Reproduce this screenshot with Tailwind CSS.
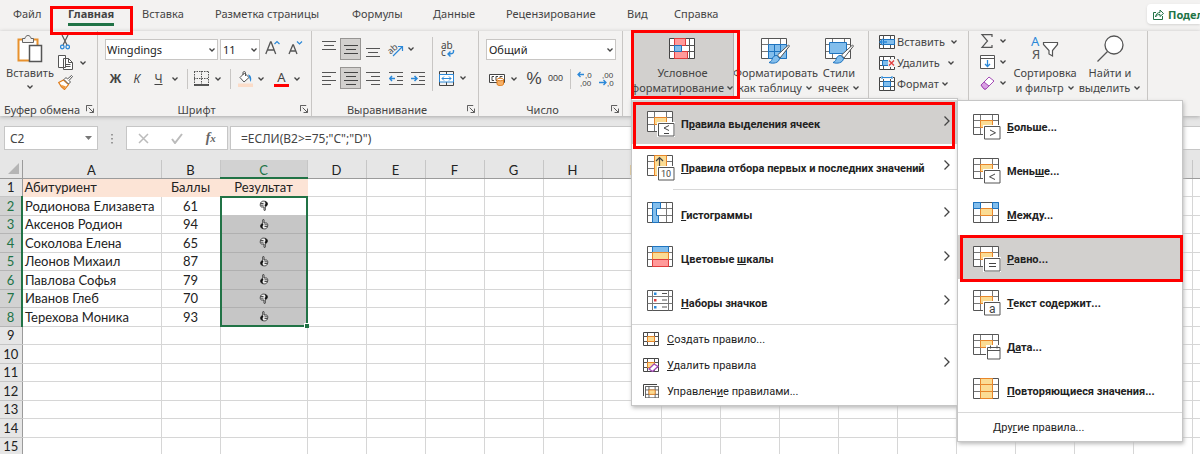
<!DOCTYPE html>
<html lang="ru">
<head>
<meta charset="utf-8">
<title>Excel</title>
<script src="https://cdn.jsdelivr.net/npm/@tailwindcss/browser@4"></script>
</head>
<body class="h-screen overflow-hidden bg-[#e6e6e6] font-['Noto_Sans','Open_Sans',sans-serif] text-[11px] leading-[15px] text-[#444]">

<svg class="hidden" xmlns="http://www.w3.org/2000/svg">
  <symbol id="chev" viewBox="0 0 8 6"><path d="M1.500 1.500 4 4 6.500 1.500" fill="none" stroke="#444" stroke-width="1.300"/></symbol>
  <symbol id="right" viewBox="0 0 8 12"><path d="M1.500 1.500 6 6 1.500 10.500" fill="none" stroke="#444" stroke-width="1.300"/></symbol>
  <symbol id="launch" viewBox="0 0 9 9"><path d="M.5 7V.5H7M3 3l5 5M8.500 4v4.500H4" fill="none" stroke="#444"/></symbol>
  <symbol id="grid" viewBox="0 0 28 26"><path d="M.5.500h25v20H.5z" fill="#fff"/><path d="M7.500.5v20M19.500.5v20M.5 6.500h25M.5 13.500h25" stroke="#777" fill="none"/><path d="M.5.500h25v20H.5z" fill="none" stroke="#555"/></symbol>
  <symbol id="gridhot" viewBox="0 0 28 26"><use href="#grid"/><path d="M7.500 6.500h12v7h-12z" fill="#fbdc94" stroke="#e8862a"/></symbol>
  <symbol id="tag" viewBox="0 0 28 26"><path d="M10 11h18v15H10z" fill="#fff"/><path d="M11.500 12.500h15.500v12.500H11.500z" fill="#fff" stroke="#555"/></symbol>
  <symbol id="brush" viewBox="0 0 22 20"><path d="M20.500 1 9.500 11l2.500 3L21.500 2z" fill="#fff" stroke="#555"/><path d="M9 11.500c-3-.5-4.500 2-5 4-.4 1.500-1.500 2.500-3 3 4 1.500 10 .5 10.500-4z" fill="#83beec" stroke="#1e74c0"/></symbol>
  <symbol id="mini" viewBox="0 0 16 14"><path d="M.5.500h15v13H.5z" fill="#fff" stroke="#444"/><path d="M4.500.5v13M11.500.5v13M.5 4.500h15M.5 9.500h15" stroke="#555"/></symbol>
  <symbol id="up" viewBox="0 0 10 11"><path d="M3.700 4.500V1c0-.8 1.300-.8 1.300 0v3h2.500c1 .3 1.500 1.500 1.200 3-.2 1.800-1.500 2.900-3.400 2.900C3 9.900 1.500 8.700 1.500 7c0-1.200.8-2.200 2.200-2.500z" fill="#eee" stroke="#222" stroke-width=".8"/><path d="M3.500 4.500C2 5 1.500 6 1.700 7.500c.2 1.200 1 2 2.300 2.300L3.500 7l1-1.200z" fill="#111"/><path d="M5.500 5.800h2.500M5.500 7.500h2.500" stroke="#222" stroke-width=".8"/></symbol>
  <symbol id="down" viewBox="0 0 10 11"><use href="#up" transform="matrix(-1 0 0 -1 10 11)"/></symbol>
</svg>

<!-- Tabs -->
<header class="flex h-[31px] items-start justify-between bg-[#f3f2f1] pt-1">
  <nav class="grid grid-cols-[55px_74px_73px_137px_81px_73px_121px_47px_60px] pt-[2px] pl-[13px] whitespace-nowrap">
    <a href="#">Файл</a>
    <a href="#" class="relative font-bold"><span class="inline-block border-b-3 border-[#217346] pb-[2px]">Главная</span><span class="absolute top-0 -left-[18px] h-[29px] w-[83px] border-3 border-[#f00]"></span></a>
    <a href="#">Вставка</a><a href="#">Разметка страницы</a><a href="#">Формулы</a><a href="#">Данные</a><a href="#">Рецензирование</a><a href="#">Вид</a><a href="#">Справка</a>
  </nav>
  <button class="flex h-5 w-[53px] shrink-0 items-center gap-1 overflow-hidden rounded-l-sm bg-white pl-[6px] font-bold text-[#217346] shadow-sm">
    <svg class="size-[11px] shrink-0" viewBox="0 0 11 11" fill="none" stroke="#217346"><path d="M3 3.500H.5v7h9V7M2.500 8c.5-3 2-4.500 4.500-4.500V1l3.500 3.500L7 7.500V5.500C5 5.500 3.500 6 2.500 8z"/></svg>Поделиться
  </button>
</header>

<!-- Ribbon -->
<section class="flex h-[85px] bg-[#f3f2f1] shadow-[0_1px_4px_#aaa]">
  <div class="flex w-[98px] shrink-0 flex-col">
    <div class="flex h-[71px] border-r border-[#c8c6c4]">
      <button class="flex w-[58px] flex-col items-center pt-1 pl-[2px]">
        <svg class="h-7 w-[26px]" viewBox="0 0 26 28" fill="none"><path d="M1.500 4.500h19v21h-19z" fill="#fff" stroke="#e8912d" stroke-width="2"/><path d="M5.500 7.500v-4H8c.3-2 1.500-3 3-3s2.700 1 3 3h2.500v4z" fill="#f3f2f1" stroke="#666"/><path d="M12.500 10.500h12v16h-12z" fill="#fff" stroke="#555" stroke-width="1.500"/></svg>
        <span class="pt-[2px]">Вставить</span><svg class="mt-1 h-[6px] w-2"><use href="#chev"/></svg>
      </button>
      <div class="flex flex-col gap-[5px] pt-1">
        <button aria-label="Вырезать" class="pl-[2px]"><svg class="h-[15px] w-[10px]" viewBox="0 0 10 15" fill="none"><path d="M2 0 7 10M8 0 3 10" stroke="#555" stroke-width="1.200"/><circle cx="2.300" cy="12" r="1.800" stroke="#2b88d8" stroke-width="1.300"/><circle cx="7.700" cy="12" r="1.800" stroke="#2b88d8" stroke-width="1.300"/></svg></button>
        <button aria-label="Копировать" class="flex items-center gap-[6px]"><svg class="h-[15px] w-[15px]" viewBox="0 0 15 15" fill="#fff" stroke="#555"><path d="M.5.500h7v12h-7zM5.500 3.500h5l4 4v7h-9z"/><path d="M10.500 3.500v4h4M7.500 9.500h5M7.500 11.500h5" fill="none"/></svg><svg class="h-[6px] w-2"><use href="#chev"/></svg></button>
        <button aria-label="Формат по образцу"><svg class="h-[15px] w-[15px]" viewBox="0 0 15 15"><path d="M.7 7.500 5.500 5l5 4.500-4 5C4.500 13 2 10.500.7 7.500z" fill="#fff" stroke="#e07c1a" stroke-width="1.200"/><path d="M2.500 9.500 8 11.500l-2 2.500z" fill="#f09a3e"/><path d="M6 4.500 8 2.500l1.500 1.500L13.500.5l1 1-3.500 4 1.500 1.500-2 2z" fill="#fff" stroke="#555"/></svg></button>
      </div>
    </div>
    <div class="flex h-[14px] items-center justify-between border-r border-[#c8c6c4] pr-[3px] pl-1"><span>Буфер обмена</span><svg class="size-[8px]"><use href="#launch"/></svg></div>
  </div>

  <div class="flex w-[214px] shrink-0 flex-col border-r border-[#c8c6c4]">
    <div class="flex h-[71px] flex-col gap-2 pt-2 pl-[7px]">
      <div class="flex h-[21px] items-center">
        <div class="relative"><select aria-label="Шрифт" class="h-[21px] w-[113px] appearance-none border border-[#c8c6c4] bg-white px-px text-[#222]"><option>Wingdings</option></select><svg class="absolute top-2 right-[2px] h-[6px] w-2"><use href="#chev"/></svg></div>
        <div class="relative ml-[2px]"><select aria-label="Размер" class="h-[21px] w-10 appearance-none border border-[#c8c6c4] bg-white px-[2px] text-[#222]"><option>11</option></select><svg class="absolute top-2 right-[2px] h-[6px] w-2"><use href="#chev"/></svg></div>
        <button aria-label="Увеличить размер" class="ml-[5px] pb-1"><svg class="h-[15px] w-[15px]" viewBox="0 0 15 15"><path d="M.8 14 5.500 2h.6l4.600 12M2.500 10h6.500" fill="none" stroke="#555" stroke-width="1.300"/><path d="M9.500 4 12 1.500 14.500 4" fill="none" stroke="#2b88d8" stroke-width="1.200"/></svg></button>
        <button aria-label="Уменьшить размер" class="ml-2 pb-1"><svg class="h-[15px] w-[15px]" viewBox="0 0 15 15"><path d="M1 14 4.800 5h.6L9 14M2.500 11h5.200" fill="none" stroke="#555" stroke-width="1.300"/><path d="M9 1.500 11.500 4 14 1.500" fill="none" stroke="#2b88d8" stroke-width="1.200"/></svg></button>
      </div>
      <div class="flex h-[21px] items-center text-[12px]">
        <button class="w-[21px] font-bold">Ж</button><button class="w-[22px] italic">К</button><button class="w-[21px] underline">Ч</button>
        <svg class="ml-[2px] h-[6px] w-2"><use href="#chev"/></svg>
        <span class="ml-2 h-5 w-px bg-[#c8c6c4]"></span>
        <button aria-label="Границы" class="ml-[6px]"><svg class="h-[15px] w-[15px]" viewBox="0 0 15 15" fill="none" stroke="#555"><path d="M.5.500v13M14.500.5v13M0 .5h15M7.500 0v13M0 7.500h15" stroke-dasharray="1.500 1"/><path d="M0 14h15" stroke="#222" stroke-width="1.500"/></svg></button>
        <svg class="ml-[5px] h-[6px] w-2"><use href="#chev"/></svg>
        <span class="ml-2 h-5 w-px bg-[#c8c6c4]"></span>
        <button aria-label="Заливка" class="ml-[7px]"><svg class="h-4 w-[15px]" viewBox="0 0 15 16"><path d="M2 6.500 6.500 2 11 6.500 6 11z" fill="#fff" stroke="#555"/><path d="M5 4V1.500C5 .3 7.500.3 7.500 1.500V5" fill="none" stroke="#555"/><path d="M10 3.500c3 .5 4 3.500 2.800 7.500-.8-1-1.300-4.500-2.800-7.500z" fill="#2b88d8"/><path d="M0 12.500h15V16H0z" fill="#fbdcc8"/></svg></button>
        <svg class="ml-1 h-[6px] w-2"><use href="#chev"/></svg>
        <button class="ml-[9px] h-4 w-[15px] border-b-3 border-[#f00] text-[13px] leading-[12px]">A</button>
        <svg class="ml-[4px] h-[6px] w-2"><use href="#chev"/></svg>
      </div>
    </div>
    <div class="relative flex h-[14px] items-center justify-center pr-4"><span>Шрифт</span><svg class="absolute right-[3px] size-[8px]"><use href="#launch"/></svg></div>
  </div>

  <div class="flex w-[167px] shrink-0 flex-col border-r border-[#c8c6c4]">
    <div class="flex h-[71px] pt-[6px] pl-[6px]">
      <div class="flex h-[54px] w-[115px] flex-col gap-[5px] border-r border-[#c8c6c4]">
        <div class="flex h-6 items-center">
          <button aria-label="По верхнему краю" class="w-[22px]"><svg class="mx-auto mb-[7px] h-[9px] w-[14px]" stroke="#555"><path d="M0 .5h14M2 4.500h10M0 8.500h14"/></svg></button>
          <button aria-label="По середине" class="h-[22px] w-[21px] border border-[#979593] bg-[#d2d0ce]"><svg class="mx-auto h-[9px] w-[14px]" stroke="#444"><path d="M0 .5h14M2 4.500h10M0 8.500h14"/></svg></button>
          <button aria-label="По нижнему краю" class="w-[23px]"><svg class="mx-auto mt-[7px] h-[9px] w-[14px]" stroke="#555"><path d="M0 .5h14M2 4.500h10M0 8.500h14"/></svg></button>
          <button aria-label="Ориентация" class="ml-1 flex items-center gap-1"><svg class="h-[15px] w-[15px] overflow-visible" viewBox="0 0 15 15"><text x="0" y="10" font-size="9" fill="#555" transform="rotate(-42 5 8)">ab</text><path d="M5 14 14 5M10 4.500h4.500V9" fill="none" stroke="#2b88d8" stroke-width="1.200"/></svg><svg class="h-[6px] w-2"><use href="#chev"/></svg></button>
        </div>
        <div class="flex h-6 items-center">
          <button aria-label="По левому краю" class="w-[22px]"><svg class="mx-auto h-[13px] w-[14px]" stroke="#555"><path d="M0 .5h14M0 4.500h9M0 8.500h14M0 12.500h9"/></svg></button>
          <button aria-label="По центру" class="h-[22px] w-[21px] border border-[#979593] bg-[#d2d0ce]"><svg class="mx-auto h-[13px] w-[14px]" stroke="#444"><path d="M0 .5h14M2 4.500h10M0 8.500h14M2 12.500h10"/></svg></button>
          <button aria-label="По правому краю" class="w-[23px]"><svg class="mx-auto h-[13px] w-[14px]" stroke="#555"><path d="M0 .5h14M5 4.500h9M0 8.500h14M5 12.500h9"/></svg></button>
          <button aria-label="Уменьшить отступ" class="ml-[5px]"><svg class="h-[13px] w-[14px]" stroke="#555"><path d="M0 .5h14M8 4.500h6M8 8.500h6M0 12.500h14"/><path d="M1 6.500h5M3 4 .7 6.500 3 9" stroke="#2b88d8" stroke-width="1.500" fill="none"/></svg></button>
          <button aria-label="Увеличить отступ" class="ml-2"><svg class="h-[13px] w-[14px]" stroke="#555"><path d="M0 .5h14M8 4.500h6M8 8.500h6M0 12.500h14"/><path d="M0 6.500h5M3.500 4 6 6.500 3.500 9" stroke="#2b88d8" stroke-width="1.500" fill="none"/></svg></button>
        </div>
      </div>
      <div class="flex flex-col gap-[5px] pl-[6px]">
        <button aria-label="Перенести текст" class="flex h-6 items-center pl-[2px]"><svg class="h-[17px] w-[14px] overflow-visible" viewBox="0 0 14 17"><text x="0" y="8" font-size="10" fill="#444">ab</text><text x="0" y="15" font-size="10" fill="#444">c</text><path d="M12.500 9v1.500c0 2-1 2.500-5 2.500M9.500 10.500 7 13l2.500 2.500" fill="none" stroke="#2b88d8" stroke-width="1.400"/></svg></button>
        <button aria-label="Объединить" class="flex h-6 items-center gap-[5px]"><svg class="h-[15px] w-[15px]" viewBox="0 0 15 15" fill="none"><path d="M.5.500h14v14H.5zM7.500.5v3M7.500 11v4" stroke="#444"/><path d="M.5 3.500h14v7.500H.5z" fill="#fff" stroke="#2b88d8"/><path d="M3 7.500h9M5 5.500 3 7.500l2 2M10 5.500l2 2-2 2" stroke="#2b88d8"/></svg><svg class="h-[6px] w-2"><use href="#chev"/></svg></button>
      </div>
    </div>
    <div class="relative flex h-[14px] items-center justify-center pr-4"><span>Выравнивание</span><svg class="absolute right-[3px] size-[8px]"><use href="#launch"/></svg></div>
  </div>

  <div class="flex w-[144px] shrink-0 flex-col border-r border-[#c8c6c4]">
    <div class="flex h-[71px] flex-col gap-2 pt-2 pl-[7px]">
      <div class="relative w-[130px]"><select aria-label="Числовой формат" class="h-[21px] w-full appearance-none border border-[#c8c6c4] bg-white px-[2px] text-[#222]"><option>Общий</option></select><svg class="absolute top-2 right-[2px] h-[6px] w-2"><use href="#chev"/></svg></div>
      <div class="flex h-[21px] items-center">
        <button aria-label="Финансовый формат" class="ml-[3px] flex items-center gap-1"><svg class="h-[14px] w-[17px]" viewBox="0 0 17 14"><path d="M.5 2.500h15v8H.5z" fill="#fff" stroke="#444"/><path d="M5 4.500H3v4h2M9 4.500H7v4h2M11 8V4.500h2.500" fill="none" stroke="#444"/><path d="M8 7.500v4.500c0 2 6.500 2 6.500 0V7.500z" fill="#f6b26b" stroke="#e07c1a"/><ellipse cx="11.200" cy="7.500" rx="3.200" ry="1.300" fill="#fff" stroke="#e07c1a"/></svg><svg class="h-[6px] w-2"><use href="#chev"/></svg></button>
        <button class="ml-2 w-4 font-['Liberation_Sans',sans-serif] text-[17px]">%</button>
        <button class="ml-[5px] w-[17px] font-['Liberation_Sans',sans-serif] text-[9px]">000</button>
        <span class="ml-[6px] h-5 w-px bg-[#c8c6c4]"></span>
        <button aria-label="Увеличить разрядность" class="ml-[6px] font-['Liberation_Sans',sans-serif]"><svg class="h-[15px] w-[15px] overflow-visible" viewBox="0 0 15 15" font-size="8" fill="#444"><text x="8" y="7">,0</text><text x="3" y="15">,00</text><path d="M1 3.500h6M3.500 1 1 3.500 3.500 6" fill="none" stroke="#2b88d8" stroke-width="1.300"/></svg></button>
        <button aria-label="Уменьшить разрядность" class="ml-[7px] font-['Liberation_Sans',sans-serif]"><svg class="h-[15px] w-[15px] overflow-visible" viewBox="0 0 15 15" font-size="8" fill="#444"><text x="3" y="7">,00</text><text x="8" y="15">,0</text><path d="M0 11.500h7M4.500 9 7 11.500 4.500 14" fill="none" stroke="#2b88d8" stroke-width="1.300"/></svg></button>
      </div>
    </div>
    <div class="relative flex h-[14px] items-center justify-center pr-4"><span>Число</span><svg class="absolute right-[3px] size-[8px]"><use href="#launch"/></svg></div>
  </div>

  <div class="flex w-[246px] shrink-0 border-r border-[#c8c6c4] pl-[9px] whitespace-nowrap">
    <button class="relative flex h-[67px] w-[102px] flex-col items-center border-r border-[#b0aeac] bg-[#d2d0ce] pt-[7px]">
      <svg class="h-[22px] w-[27px]" viewBox="0 0 27 22"><path d="M.5.500h25v20H.5z" fill="#fff" stroke="#444"/><path d="M5.500.5v20M12.500.5v20M20.500.5v20M.5 7.500h25M.5 13.500h25" stroke="#555"/><path d="M5.500.500h11v7h-11zM5.500 13.500h13v7h-13z" fill="#ff9a9a" stroke="#e03c3c"/><path d="M5.500 7.500h7v6h-7z" fill="#83beec" stroke="#1e74c0"/></svg>
      <span class="pt-[5px]">Условное</span><span class="flex items-center gap-[2px]">форматирование<svg class="h-[6px] w-2"><use href="#chev"/></svg></span>
      <span class="absolute -top-px -left-px z-10 h-[69px] w-[109px] border-3 border-[#f00]"></span>
    </button>
    <button class="flex w-[82px] flex-col items-center pt-[7px] pl-px">
      <svg class="h-[26px] w-[29px]" viewBox="0 0 29 26"><use href="#grid" width="28" height="26"/><path d="M7.500 6.500h18v14h-18z" fill="#83beec" stroke="#1e74c0"/><path d="M13.500 6v14M19.500 6v14M7 13.500h18" stroke="#1e74c0"/><use href="#brush" x="7" y="6" width="22" height="20"/></svg>
      <span class="pt-px">Форматировать</span><span class="flex items-center gap-[3px]">как таблицу<svg class="h-[6px] w-2"><use href="#chev"/></svg></span>
    </button>
    <button class="flex w-[46px] flex-col items-center pt-[7px]">
      <svg class="h-[26px] w-[29px]" viewBox="0 0 29 26"><use href="#grid" width="28" height="26"/><path d="M4.500 4.500h17v11h-17z" fill="#83beec" stroke="#1e74c0"/><use href="#brush" x="7" y="6" width="22" height="20"/></svg>
      <span class="pt-px">Стили</span><span class="flex items-center gap-[3px]">ячеек<svg class="h-[6px] w-2"><use href="#chev"/></svg></span>
    </button>
  </div>

  <div class="flex w-[100px] shrink-0 flex-col gap-[6px] border-r border-[#c8c6c4] pt-[3px] pl-[10px]">
    <button class="flex items-center gap-[2px]"><svg class="h-[14px] w-4" viewBox="0 0 16 14"><use href="#mini"/><path d="M4.500 4.500h11v5h-11z" fill="#83beec" stroke="#1e74c0"/><path d="M1 7h7M4 4 1 7l3 3" stroke="#2b88d8" fill="none" stroke-width="1.500"/></svg>Вставить<svg class="ml-[3px] h-[6px] w-2"><use href="#chev"/></svg></button>
    <button class="flex items-center gap-[2px]"><svg class="h-[14px] w-4" viewBox="0 0 16 14"><use href="#mini"/><path d="M3.500 4.500h6v5h-6z" fill="#83beec" stroke="#1e74c0"/><path d="M9 3h7v8H9z" fill="#f3f2f1"/><path d="m10 4.500 5 5m0-5-5 5" stroke="#e03c3c" stroke-width="1.300"/></svg>Удалить<svg class="ml-[5px] h-[6px] w-2"><use href="#chev"/></svg></button>
    <button class="flex items-center gap-[2px]"><svg class="h-[15px] w-4" viewBox="0 0 16 15"><use href="#mini" y="1" width="16" height="14"/><path d="M4.500 5.500h7v5h-7z" fill="#83beec" stroke="#1e74c0"/><path d="M2 0h12v3H2z" fill="#f3f2f1"/><path d="M3 1.500h10M3 0v3M13 0v3" stroke="#2b88d8"/></svg>Формат<svg class="h-[6px] w-2"><use href="#chev"/></svg></button>
  </div>

  <div class="flex w-[179px] shrink-0 border-r border-[#c8c6c4] pl-[11px] whitespace-nowrap">
    <div class="flex w-[34px] flex-col gap-[7px] pt-[3px]">
      <button aria-label="Сумма" class="flex items-center gap-1"><svg class="h-[14px] w-[15px]" viewBox="0 0 15 14"><path d="M12 3V.7H2L7.500 7 2 13.300h10V11" fill="none" stroke="#555" stroke-width="1.200"/></svg><svg class="h-[6px] w-2"><use href="#chev"/></svg></button>
      <button aria-label="Заполнить" class="flex items-center gap-1"><svg class="h-[14px] w-[15px]" viewBox="0 0 15 14"><path d="M.5.500h14v13H.5zM.5 3.500h14" fill="#fff" stroke="#555"/><path d="M7.500 5v6.500M5 9l2.500 2.500L10 9" fill="none" stroke="#2b88d8" stroke-width="1.300"/></svg><svg class="h-[6px] w-2"><use href="#chev"/></svg></button>
      <button aria-label="Очистить" class="flex items-center gap-1"><svg class="h-[14px] w-[15px]" viewBox="0 0 15 14"><path d="M1 9 9 1l5 4-8 8H4z" fill="#fff" stroke="#a349b5"/><path d="m1 9 3-3 5 4-3 3H4z" fill="#d9a0e3" stroke="#a349b5"/></svg><svg class="h-[6px] w-2"><use href="#chev"/></svg></button>
    </div>
    <button class="flex w-[62px] flex-col items-center pt-1">
      <svg class="h-[26px] w-[28px] overflow-visible" viewBox="0 0 28 26"><text x="0" y="11" font-size="13" fill="#2b88d8">A</text><text x="1" y="24" font-size="13" fill="#555">Я</text><path d="M12.500 7.500h14v2l-5 6V21l-3.500-2v-3.500l-5.500-6z" fill="#fff" stroke="#555" stroke-width="1.200"/></svg>
      <span class="pt-1">Сортировка</span><span class="flex items-center gap-[3px]">и фильтр<svg class="h-[6px] w-2"><use href="#chev"/></svg></span>
    </button>
    <button class="flex w-[68px] flex-col items-center pt-1">
      <svg class="h-[27px] w-[27px]" viewBox="0 0 27 27" fill="none" stroke="#555" stroke-width="1.300"><circle cx="17" cy="10" r="9" fill="#fff"/><path d="M10.500 16.500.500 26.500"/></svg>
      <span class="pt-[3px]">Найти и</span><span class="flex items-center gap-[3px]">выделить<svg class="h-[6px] w-2"><use href="#chev"/></svg></span>
    </button>
  </div>
</section>

<!-- Formula bar -->
<section class="flex h-[44px] items-start pt-[10px] pl-1">
  <div class="relative"><input aria-label="Имя" value="C2" class="h-6 w-[94px] border border-[#c6c6c6] bg-white px-[5px] text-[12px]"><svg class="absolute top-[10px] right-[6px] h-1 w-[7px]" viewBox="0 0 7 4"><path d="M0 0h7L3.500 4z" fill="#777"/></svg></div>
  <svg class="mt-2 ml-3 h-[10px] w-1" fill="#999"><path d="M1 0h2v1.500H1zM1 4h2v1.500H1zM1 8h2v1.500H1z"/></svg>
  <div class="ml-3 flex h-6 w-[102px] items-center justify-around border border-[#c6c6c6] bg-white">
    <button aria-label="Отмена"><svg class="size-[11px]" viewBox="0 0 11 11"><path d="m1 1 9 9m0-9-9 9" stroke="#bbb" stroke-width="1.500"/></svg></button>
    <button aria-label="Ввод"><svg class="h-[11px] w-3" viewBox="0 0 12 11"><path d="m1 6 3 4 7-9" fill="none" stroke="#bbb" stroke-width="2"/></svg></button>
    <button class="font-['Liberation_Serif',serif] text-[14px] font-bold text-[#666] italic">f<span class="text-[11px]">x</span></button>
  </div>
  <input aria-label="Формула" value='=ЕСЛИ(B2&gt;=75;"C";"D")' class="ml-[2px] h-6 min-w-0 flex-1 border border-r-0 border-[#c6c6c6] bg-white px-[10px] text-[12px]">
</section>

<!-- Sheet -->
<table class="w-[1251px] table-fixed border-collapse bg-white font-['Lato','Noto_Sans',sans-serif] text-[13px] leading-[14px] text-[#222]">
  <thead class="bg-[#e6e6e6] font-normal"><tr id="cols" class="h-[18px]"></tr></thead>
  <tbody id="rows"></tbody>
</table>

<!-- Conditional formatting menus -->
<div id="menu" class="absolute top-[98px] left-[631px] w-[327px] border border-[#c6c6c6] bg-white pt-px pb-px font-['Roboto','Noto_Sans',sans-serif] text-[#222] shadow-[1px_2px_4px_#bbb]"></div>
<div id="sub" class="absolute top-[100px] left-[957px] w-[226px] border border-[#c6c6c6] bg-white pt-[2px] pb-px font-['Roboto','Noto_Sans',sans-serif] text-[#222] shadow-[1px_2px_4px_#bbb]"></div>

<script>
const data = [['Родионова Елизавета',61,'down'],['Аксенов Родион',94,'up'],['Соколова Елена',65,'down'],['Леонов Михаил',87,'up'],['Павлова Софья',79,'up'],['Иванов Глеб',70,'down'],['Терехова Моника',93,'up']];
const letters = 'ABCDEFGHIJKLMNOPQRS'.split('');
const widths = [139,59,87];
document.getElementById('cols').innerHTML =
  '<th class="border-r border-b border-[#9b9b9b]" style="width:22px"><svg class="ml-auto mr-[3px] size-[11px]"><path d="M11 0v11H0z" fill="#b5b5b5"/></svg></th>' +
  letters.map((l, i) => `<th class="border-r border-b p-0 pt-[2px] font-normal ${l === 'C' ? 'border-r-[#c6c6c6] border-b-2 border-b-[#217346] bg-[#d2d2d2] text-[#217346]' : 'border-r-[#c6c6c6] border-b-[#9b9b9b]'}" style="width:${widths[i] || 59}px">${l}</th>`).join('');
let html = '';
for (let r = 1; r <= 15; r++) {
  const d = data[r - 2];
  const cells = letters.map((l, i) => {
    if (r === 1 && i < 3) return `<td class="border border-[#fce4d6] bg-[#fce4d6] px-[2px] py-0 ${i ? 'text-center' : ''}">${['Абитуриент','Баллы','Результат'][i]}</td>`;
    if (d && i < 2) return `<td class="border border-[#d6d6d6] px-[2px] py-0 whitespace-nowrap ${i ? 'text-center' : ''}">${d[i]}</td>`;
    if (d && i === 2) return `<td class="relative border p-0 ${r === 2 ? 'border-[#c6c6c6] bg-white' : 'border-[#b0b0b0] bg-[#c6c6c6]'}"><svg class="mx-auto h-[11px] w-[10px]"><use href="#${d[2]}"/></svg>${r === 2 ? '<span class="absolute -top-px -left-px z-10 h-[131px] w-[88px] border-2 border-[#217346]"></span>' : ''}${r === 8 ? '<span class="absolute -right-[2px] -bottom-[2px] z-10 size-[5px] border-t border-l border-white bg-[#217346]"></span>' : ''}</td>`;
    return '<td class="border border-[#d6d6d6] p-0"></td>';
  }).join('');
  html += `<tr class="${r % 2 ? 'h-[18px]' : 'h-[19px]'}"><th class="border-b p-0 font-normal ${d ? 'border-b-[#b5b5b5] border-r-2 border-r-[#217346] bg-[#d2d2d2] text-[#217346]' : 'border-r border-r-[#9b9b9b] border-b-[#c6c6c6] bg-[#e6e6e6]'}">${r}</th>${cells}</tr>`;
}
document.getElementById('rows').innerHTML = html;

const hot = '<use href="#gridhot" width="28" height="26"/>', grid = '<use href="#grid" width="28" height="26"/>', tag = '<use href="#tag" width="28" height="26"/>';
const sign = p => hot + tag + `<path d="${p}" fill="none" stroke="#444"/>`;
const icons = {
  le: sign('M22 14.500 17 17l5 2.500M17 22.500h5'),
  gt: sign('M17 16l5.500 2.800-5.500 2.700'),
  lt: sign('M22 16l-5.500 2.800 5.500 2.700'),
  eq: sign('M16 17.500h7M16 20.500h7'),
  txt: hot + tag + '<text x="16" y="23" font-size="12" font-weight="400" fill="#444">a</text>',
  ten: grid + '<path d="M7.500.5h12v20h-12z" fill="#fbdc94" stroke="#e8862a"/><path d="M12.500 12V3M9 6l3.500-3.500L16 6" fill="none" stroke="#444" stroke-width="1.200"/>' + tag + '<text x="14" y="22" font-size="9" font-weight="400" fill="#444">10</text>',
  bars: grid + '<path d="M5.500.5h8v6h-4v7h2v7h-6z" fill="#83beec" stroke="#1e74c0"/>',
  scale: grid + '<path d="M5.500.5h16v6h-16z" fill="#83beec" stroke="#1e74c0"/><path d="M5.500 6.500h16v7h-16z" fill="#fbdc94" stroke="#e8862a"/><path d="M5.500 13.500h16v7h-16z" fill="#ff9a9a" stroke="#e03c3c"/>',
  set: '<path d="M.5.500h25v20H.5z" fill="#fff" stroke="#555"/><path d="M5.500.5v20M21.500.5v20M.5 6.500h25M.5 13.500h25" stroke="#777"/><path d="M15 3.500h5M15 10h5M15 17h5" stroke="#555"/><path d="M7 2.500h2.500V5H7zM7 16h2.500v2.500H7z" fill="#2b88d8"/><path d="M7 9h2.500v2.500H7z" fill="#e03c3c"/>',
  mid: hot + '<path d="M.5.500h7v6h-7zM19.500.5h6v6h-6z" fill="#83beec" stroke="#1e74c0"/>',
  date: hot + '<path d="M13 11h15v15H13z" fill="#fff"/><path d="M14.500 13.500h12.500v11.500H14.500zM14.500 16.500h12.500M17.500 11.500v3M24 11.500v3" fill="none" stroke="#555"/>',
  dup: grid + '<path d="M7.500.5h12v6h-12zM7.500 6.500h12v7h-12zM7.500 13.500h12v7h-12z" fill="#fbdc94" stroke="#e8862a"/>',
};
const minihot = '<use href="#mini" width="16" height="14"/><path d="M4.500 4.500h7v5h-7z" fill="#fbdc94" stroke="#e8862a"/>';
const small = {
  add: minihot,
  del: minihot + '<path d="m6 11 5-5 4 2.500-5.500 5z" fill="#fff" stroke="#a349b5" stroke-width="1.300"/>',
  man: '<path d="M.5 12V.5H14" fill="none" stroke="#444"/><g transform="translate(2 2) scale(.88)">' + minihot + '</g>',
};
const arrow = '<svg class="mb-[6px] ml-auto h-3 w-2 shrink-0"><use href="#right"/></svg>';
const red = s => `<span class="absolute ${s} z-10 border-3 border-[#f00]"></span>`;
const big = (k, t, a, x = '') => `<button class="relative flex h-[44px] w-full items-center pt-1 pr-[6px] pl-[15px] text-left font-bold whitespace-nowrap ${x ? 'bg-[#d2d0ce]' : ''}"><svg class="h-[26px] w-7 shrink-0" viewBox="0 0 28 26">${icons[k]}</svg><span class="ml-[6px]">${t}</span>${a ? arrow : ''}${x}</button>`;
const line = (k, t, a) => `<button class="flex h-[26px] w-full items-center pr-[6px] pl-[11px] text-left whitespace-nowrap"><svg class="h-[14px] w-4 shrink-0" viewBox="0 0 16 14">${small[k] || ''}</svg><span class="ml-2">${t}</span>${a ? arrow : ''}</button>`;
document.getElementById('menu').innerHTML =
  big('le', 'П<u>р</u>авила выделения ячеек', 1, red('top-[2px] left-px h-[47px] w-[322px]')) +
  big('ten', '<u>П</u>равила отбора первых и последних значений', 1) +
  '<div class="my-px ml-[41px] h-px bg-[#d8d8d8]"></div>' +
  big('bars', '<u>Г</u>истограммы', 1) + big('scale', 'Цветовые <u>ш</u>калы', 1) + big('set', '<u>Н</u>аборы значков', 1) +
  '<div class="my-px h-px bg-[#d8d8d8]"></div>' +
  line('add', '<u>С</u>оздать правило...') + line('del', '<u>У</u>далить правила', 1) + line('man', 'Управлен<u>и</u>е правилами...');
document.getElementById('sub').innerHTML =
  big('gt', '<u>Б</u>ольше...') + big('lt', 'Мень<u>ш</u>е...') + big('mid', '<u>М</u>ежду...') +
  big('eq', '<u>Р</u>авно...', 0, red('top-0 left-[2px] h-[47px] w-[223px]')) +
  big('txt', '<u>Т</u>екст содержит...') + big('date', 'Д<u>а</u>та...') + big('dup', '<u>П</u>овторяющиеся значения...') +
  '<div class="my-px h-px bg-[#d8d8d8]"></div>' + line('', 'Дру<u>г</u>ие правила...');
</script>
</body>
</html>
